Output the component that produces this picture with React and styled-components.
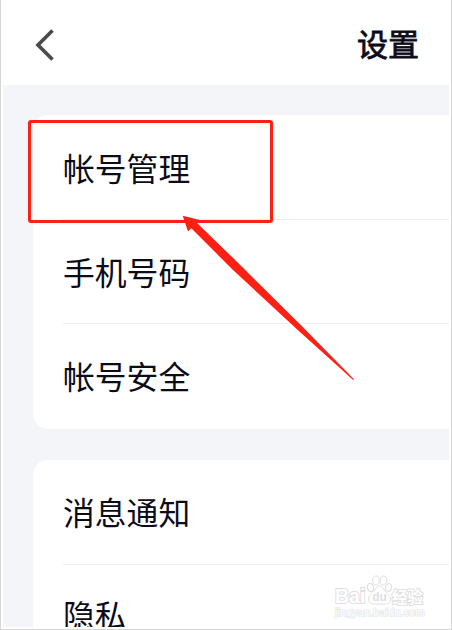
import React from 'react';
import styled, { createGlobalStyle } from 'styled-components';

const GlobalStyle = createGlobalStyle`
  * {
    box-sizing: border-box;
  }

  body {
    margin: 0;
    background: #fff;
    font-family: 'Noto Sans CJK SC', sans-serif;
    color: #0c0c18;
  }
`;

const Frame = styled.div`
  position: relative;
  width: 452px;
  height: 630px;
  padding: 3px 2px 2px;
  border: 1px solid #d6d6d6;
  border-top: none;
  background: #fff;
  overflow: hidden;
`;

const Screen = styled.div`
  height: 100%;
  display: flex;
  flex-direction: column;
  background: #f4f5f8;
  overflow: hidden;
`;

const Header = styled.header`
  flex: none;
  height: 82px;
  display: flex;
  align-items: center;
  justify-content: space-between;
  padding: 0 30px 0 32px;
  background: #fff;
`;

const BackIcon = styled.svg`
  display: block;
  margin-top: 1px;
`;

const Title = styled.h1`
  margin: 0 0 2px;
  font-size: 31px;
  line-height: 46px;
  font-weight: 400;
  -webkit-text-stroke: 0.8px #0c0c18;
`;

const Groups = styled.main`
  display: flex;
  flex-direction: column;
  gap: 31px;
  padding: 30px 0 0 30px;
`;

const Group = styled.section`
  flex: none;
  padding: 0 0 1px 30px;
  border-radius: 15px 0 0 15px;
  background: #fff;
`;

const Row = styled.div`
  height: ${(p) => (p.$first ? 105 : 104)}px;
  padding-top: ${(p) => p.$top}px;
  border-bottom: 1px solid ${(p) => (p.$last ? 'transparent' : '#ededef')};
  font-size: 31.8px;
  line-height: 48px;
  white-space: nowrap;
`;

const Highlight = styled.div`
  position: absolute;
  left: 27px;
  top: 120px;
  width: 245px;
  height: 103px;
  border: 3px solid #ff2015;
  border-radius: 3px;
`;

const Arrow = styled.svg`
  position: absolute;
  left: 181px;
  top: 215px;
`;

const Watermark = styled.div`
  position: absolute;
  left: 334px;
  top: 575px;
  width: 92px;
  color: #fff;
`;

const Brand = styled.div`
  display: flex;
  align-items: flex-end;
  height: 30px;
`;

const BrandText = styled.span`
  width: ${(p) => p.$width}px;
  font-family: ${(p) => (p.$latin ? "'Liberation Sans'" : "'Noto Sans CJK SC'")}, sans-serif;
  font-size: ${(p) => p.$size}px;
  font-weight: 700;
  line-height: 18px;
  white-space: nowrap;
  -webkit-text-stroke: 2px #dfdfdf;
  paint-order: stroke fill;
`;

const Site = styled.div`
  margin-top: 1px;
  font-family: 'Liberation Sans', sans-serif;
  font-size: 11.1px;
  line-height: 12px;
  white-space: nowrap;
  -webkit-text-stroke: 1.2px #e3e3e3;
  paint-order: stroke fill;
`;

const groups = [
  [
    { label: '帐号管理', top: 28 },
    { label: '手机号码', top: 27 },
    { label: '帐号安全', top: 27 },
  ],
  [
    { label: '消息通知', top: 27 },
    { label: '隐私', top: 25 },
  ],
];

const Paw = () => (
  <svg width="25" height="30" viewBox="0 0 25 30" fill="#fff" stroke="#dfdfdf">
    <ellipse cx="3.5" cy="12.5" rx="3" ry="4" transform="rotate(-12 3.5 12.5)" />
    <ellipse cx="9" cy="5.5" rx="3.3" ry="4.5" />
    <ellipse cx="16.5" cy="5.5" rx="3.3" ry="4.5" transform="rotate(8 16.5 5.5)" />
    <ellipse cx="21.5" cy="12.5" rx="3" ry="4" transform="rotate(15 21.5 12.5)" />
    <path d="M12.5 11c-3 0-4 3.5-6.5 6C3.5 19.5 1.5 21 1.5 24c0 3 2.5 5 5 5h12c3 0 5-2 5-5s-2-4.5-4.500-7c-2.500-2.500-3.500-6-6.500-6z" />
    <text
      x="12.5"
      y="26"
      textAnchor="middle"
      fontFamily="Liberation Sans"
      fontSize="12"
      fontWeight="700"
      fill="#dedede"
      stroke="none"
    >
      du
    </text>
  </svg>
);

const App = () => (
  <>
    <GlobalStyle />
    <Frame>
      <Screen>
        <Header>
          <BackIcon width="22" height="34" viewBox="0 0 22 34" fill="none">
            <path d="M17.5 2.5 3 17 17.5 31.5" stroke="#4b4b4d" strokeWidth="3.7" />
          </BackIcon>
          <Title>设置</Title>
        </Header>
        <Groups>
          {groups.map((rows) => (
            <Group key={rows[0].label}>
              {rows.map((row, i) => (
                <Row
                  key={row.label}
                  $first={i === 0}
                  $last={i === rows.length - 1}
                  $top={row.top}
                >
                  {row.label}
                </Row>
              ))}
            </Group>
          ))}
        </Groups>
      </Screen>
      <Highlight />
      <Arrow width="174" height="168" viewBox="182 215 174 168">
        <polygon
          points="182.7,215.8 199.7,220 197.3,223.3 237.5,262.3 302,326.3 354,379.3 353.2,380 298,330.3 232.5,269.5 191.3,228.3 188,231.5"
          fill="#ff2015"
        />
      </Arrow>
      <Watermark>
        <Brand>
          <BrandText $latin $size={19.5} $width={32}>Bai</BrandText>
          <Paw />
          <BrandText $size={15.5} $width={32}>经验</BrandText>
        </Brand>
        <Site>jingyan.baidu.com</Site>
      </Watermark>
    </Frame>
  </>
);

export default App;
